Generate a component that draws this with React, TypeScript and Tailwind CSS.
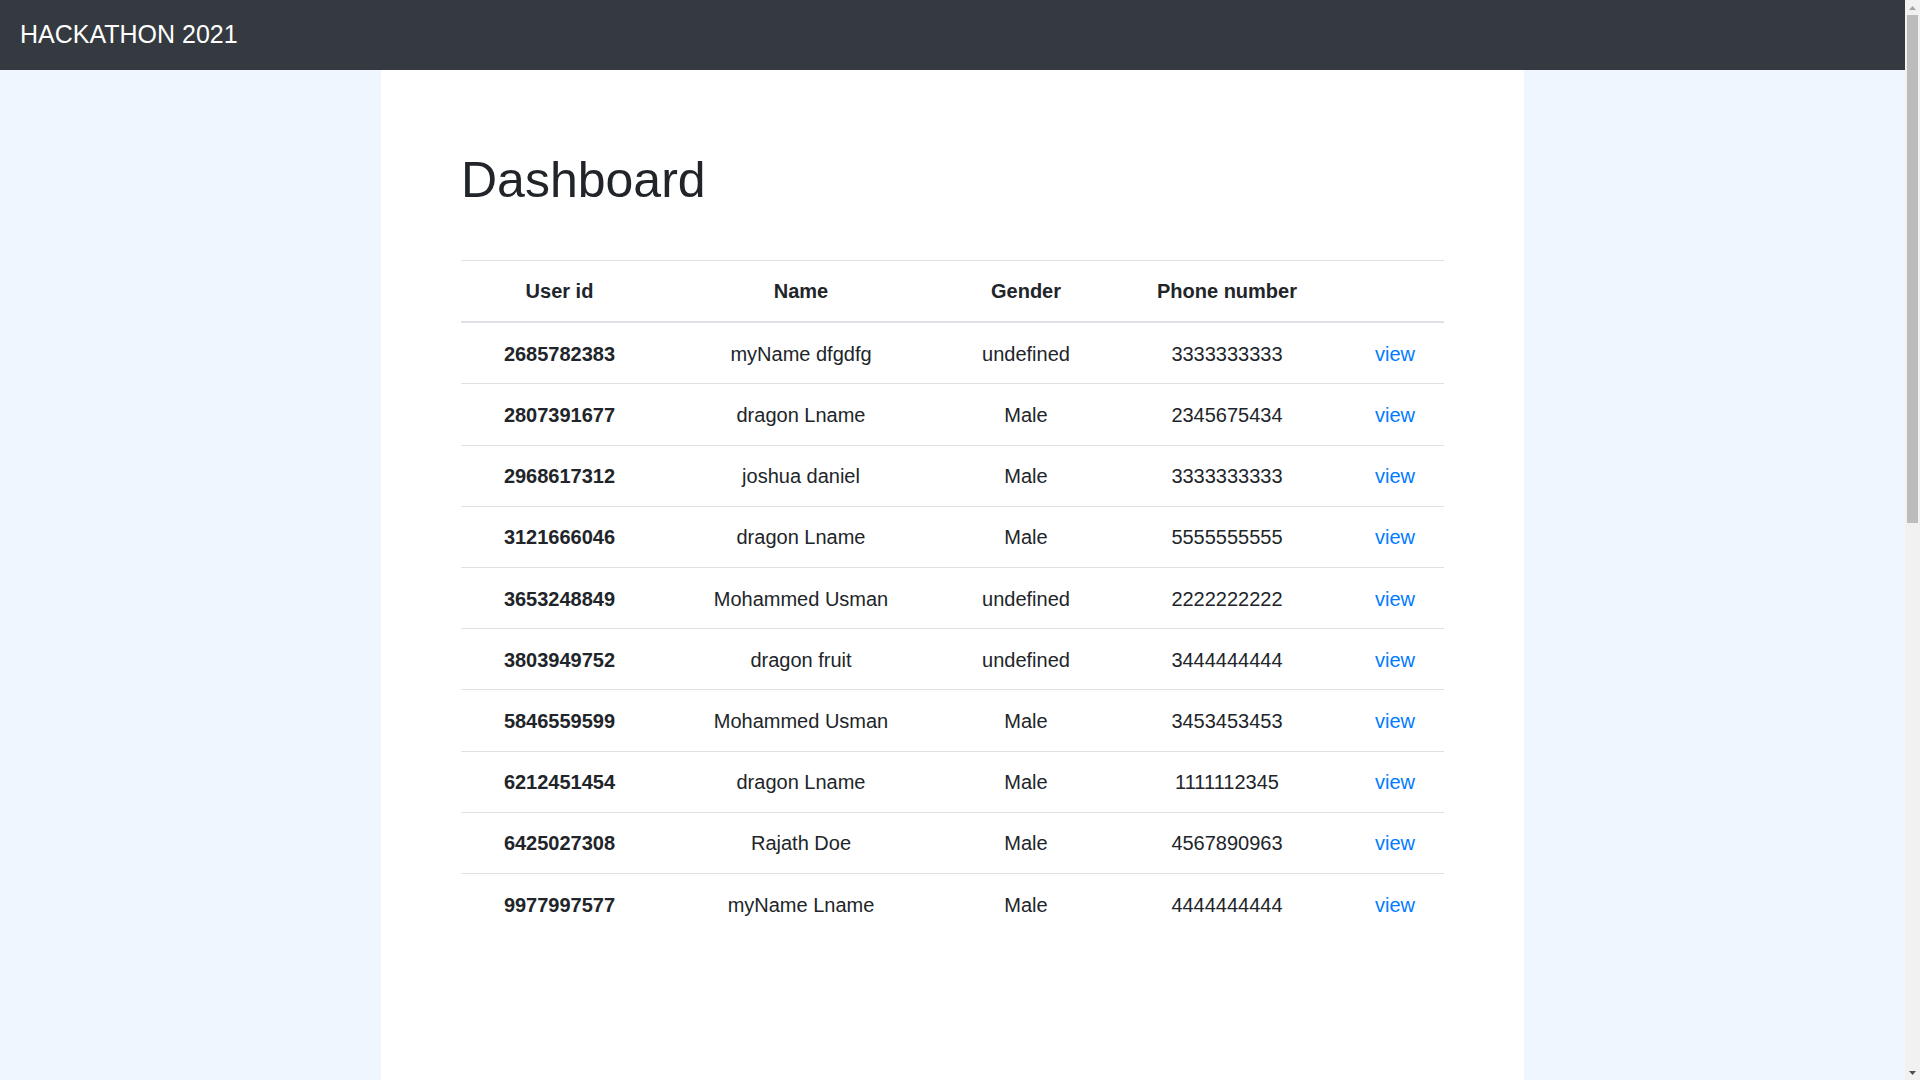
import React from 'react';

const users = [
  { id: '2685782383', name: 'myName dfgdfg', gender: 'undefined', phone: '3333333333' },
  { id: '2807391677', name: 'dragon Lname', gender: 'Male', phone: '2345675434' },
  { id: '2968617312', name: 'joshua daniel', gender: 'Male', phone: '3333333333' },
  { id: '3121666046', name: 'dragon Lname', gender: 'Male', phone: '5555555555' },
  { id: '3653248849', name: 'Mohammed Usman', gender: 'undefined', phone: '2222222222' },
  { id: '3803949752', name: 'dragon fruit', gender: 'undefined', phone: '3444444444' },
  { id: '5846559599', name: 'Mohammed Usman', gender: 'Male', phone: '3453453453' },
  { id: '6212451454', name: 'dragon Lname', gender: 'Male', phone: '1111112345' },
  { id: '6425027308', name: 'Rajath Doe', gender: 'Male', phone: '4567890963' },
  { id: '9977997577', name: 'myName Lname', gender: 'Male', phone: '4444444444' },
];

export default function App() {
  return (
    <div className="flex items-start bg-[#eff6ff] text-[#212529] font-['Liberation_Sans',Arial,sans-serif]">
      <div className="flex-1 min-w-0">
        {/* Navbar */}
        <nav className="h-[70px] bg-[#343a40] flex items-center px-[20px]">
          <a href="#" className="text-white text-[25px] leading-[37.5px]">HACKATHON 2021</a>
        </nav>

        {/* Main panel */}
        <main className="w-[1143px] mx-auto bg-white h-[2162px] pt-[80px] px-[80px]">
          <h1 className="text-[50px] leading-[60px] font-normal mb-[50px]">Dashboard</h1>

          <table className="w-full table-fixed border-collapse text-[20px] leading-[30.2px] text-center">
            <colgroup>
              <col className="w-[197px]" />
              <col className="w-[286px]" />
              <col className="w-[164px]" />
              <col className="w-[238px]" />
              <col className="w-[98px]" />
            </colgroup>
            <thead>
              <tr className="border-t border-[#dee2e6]">
                <th className="py-[15px] font-bold border-b-2 border-[#dee2e6]">User id</th>
                <th className="py-[15px] font-bold border-b-2 border-[#dee2e6]">Name</th>
                <th className="py-[15px] font-bold border-b-2 border-[#dee2e6]">Gender</th>
                <th className="py-[15px] font-bold border-b-2 border-[#dee2e6]">Phone number</th>
                <th className="py-[15px] font-bold border-b-2 border-[#dee2e6]"></th>
              </tr>
            </thead>
            <tbody>
              {users.map((u, i) => (
                <tr key={u.id} className={i > 0 ? 'border-t border-[#dee2e6]' : ''}>
                  <th className="pt-[15.5px] pb-[14.5px] font-bold">{u.id}</th>
                  <td className="pt-[15.5px] pb-[14.5px]">{u.name}</td>
                  <td className="pt-[15.5px] pb-[14.5px]">{u.gender}</td>
                  <td className="pt-[15.5px] pb-[14.5px]">{u.phone}</td>
                  <td className="pt-[15.5px] pb-[14.5px]">
                    <a href="#" className="text-[#007bff]">view</a>
                  </td>
                </tr>
              ))}
            </tbody>
          </table>
        </main>
      </div>

      {/* Window scrollbar */}
      <aside className="sticky top-0 w-[15px] h-screen shrink-0 bg-[#f1f1f1] flex flex-col items-center">
        <div className="h-[15px] flex items-center justify-center">
          <svg width="7" height="4" viewBox="0 0 7 4"><path d="M3.5 0L7 4H0z" fill="#a3a3a3" /></svg>
        </div>
        <div className="w-[11px] h-[508px] bg-[#bcbcbc]" />
        <div className="flex-1" />
        <div className="h-[15px] flex items-center justify-center">
          <svg width="7" height="4" viewBox="0 0 7 4"><path d="M0 0H7L3.5 4z" fill="#505050" /></svg>
        </div>
      </aside>
    </div>
  );
}
